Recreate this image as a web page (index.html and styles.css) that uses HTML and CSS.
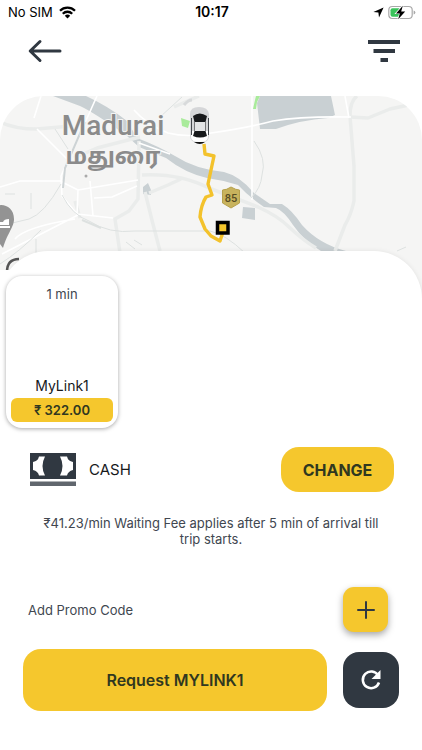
FILE: index.html
```html
<!DOCTYPE html>
<html lang="en">
<head>
<meta charset="utf-8">
<meta name="viewport" content="width=device-width, initial-scale=1">
<title>Request a ride</title>
<link rel="stylesheet" href="styles.css">
</head>
<body>
<div class="status">
  <div class="status-left">
    <span>No SIM</span>
    <svg width="17" height="13" viewBox="0 0 17 13" aria-hidden="true"><g fill="none" stroke="#000" stroke-width="2.3"><path d="M1 4.7a10.7 10.7 0 0 1 15 0"/><path d="M3.8 7.7a6.7 6.7 0 0 1 9.4 0"/></g><path d="M5.8 9.8a3.9 3.9 0 0 1 5.4 0L8.5 12.5z"/></svg>
  </div>
  <time class="clock">10:17</time>
  <div class="status-right">
    <svg width="11" height="11" viewBox="0 0 11 11" aria-hidden="true"><path d="M10.6.4 6 10.6 5.4 5.6.4 5z"/></svg>
    <svg width="28" height="15" viewBox="0 0 28 15" aria-hidden="true"><rect x=".8" y="1.5" width="23.4" height="12" rx="3.5" fill="#fff" stroke="#a9a9a9" stroke-width="1.2"/><rect x="2.5" y="3.2" width="10" height="8.6" rx="2" fill="#3ac35b"/><path d="M25.600 5.500q1.800.4 1.800 2t-1.800 2z" fill="#a9a9a9"/><path d="M14.800.8 8 8.400h3.800l-1.600 5.800 7-7.600h-4z" stroke="#fff" stroke-width="1.400" paint-order="stroke"/></svg>
  </div>
</div>

<header class="topbar">
  <button class="icon-btn" aria-label="Back">
    <svg width="34" height="24" viewBox="0 0 34 24"><path d="M32 12H3M12 2.500 2.200 12 12 21.500" fill="none" stroke="#303841" stroke-width="3" stroke-linecap="round" stroke-linejoin="round"/></svg>
  </button>
  <button class="icon-btn" aria-label="Filters">
    <svg width="34" height="24" viewBox="0 0 34 24"><path d="M1 3h32M6.500 12h21.500M13.500 21h7.500" stroke="#303841" stroke-width="3.800"/></svg>
  </button>
</header>

<main>
  <section class="map" aria-label="Route map">
    <svg class="map-art" viewBox="0 0 422 204" preserveAspectRatio="xMidYMin slice">
      <rect width="422" height="204" fill="#f5f5f4"/>
      <g fill="#c9d0d3">
        <path d="M53 0H86Q108 10 127 25L137 42Q158 50 175 60Q195 73 224 76Q240 80 254 97L270 108H282Q292 114 302 129Q319 148 346 155H321Q304 145 293 129Q284 115 276 112L264 111Q249 101 238 89Q222 84 207 82Q185 77 166 62L139 51L126 39Q93 16 80 10Z"/>
        <path d="M260 0H331L335 19L328 22Q300 24 276 33H260L257 7Z"/>
        <path d="M243 111l12 1v12l-13-2ZM143 91l5-4 3 7v5l-8-1Z"/>
      </g>
      <path d="M181 22l9 3-2 7-6-2ZM256 0h4l-3 6-1 7h-3l2-9Z" fill="#a9eb9b"/>
      <g fill="none" stroke="#eaeceb" stroke-width="3.500" stroke-linejoin="round">
        <path d="M357 0Q350 5 350 20L354 70V105Q351 119 345 129L335 155"/>
        <path d="M350 21l18 1 22-9 28-6M0 26q15 7 37 7l34-3M140 41L97 52L74 62M139 45l-1 58-9 12-14 8 5 34M145 96q7 29 15 59"/>
        <path d="M142 79q37-2 67 13l49 19q20 9 31 20 15 14 27 21M149 97l19-8 13-6M174 11l25-11M75 105l5 17"/>
      </g>
      <g fill="none" stroke="#fff" stroke-width="1.600" stroke-linejoin="round">
        <path d="M97 0L84 29L61 80L62 100L77 118L78 94 60 85L20 85L0 91M77 118l36 4M41 0L34 22M15 143q10-12 60-20M78 119L2 158M93 120l-3-35M94 102l18-1 25-11M37 33l30 30"/>
        <path d="M134 14q12 14 34 23 20 5 43 0 40-6 62-12 30-5 78-4M252 0v104M345 0l4 22M139 47l31 11M78 94l60-10"/>
      </g>
      <g fill="none" stroke="#dde1e0" stroke-width="1">
        <path d="M55 33l13 20M61 88Q44 118 29 123L0 130M62 99q10 20 27 26 20 13 46 10h75q15 3 35 22M36 166V143M0 168q19-12 41-34M254 45q13 18 8 34-1 13-11 23M182 1l-22 20M5 98h10M31 97v16M126 146l9 7M134 144l8 5M397 155l9-4"/>
        <path d="M85 26L65 72L63 92" stroke="#cdd3d5" stroke-width="2"/>
        <path d="M82 124l19 8" stroke-width="2"/>
      </g>
      <path d="M184 9q4-5 8-5" stroke="#d8dadb" stroke-width="3" fill="none"/>
      <circle cx="86" cy="80" r="1.500" fill="#aaa"/>
      <g class="city">
        <text x="113" y="39" class="city-en">Madurai</text>
        <text x="113" y="68" class="city-ta">மதுரை</text>
      </g>
      <path d="M-11 123C-11 104 14 105 14 123c0 8-6 13-11 29Q-11 134-11 123Z" fill="#939393"/>
      <path d="M0 126h3q1-3 6-3v6H0ZM0 130h10v2H0Z" fill="#fff"/>
      <path d="M7 176q0-13 12-13" stroke="#555" stroke-width="2.500" fill="none"/>
      <path d="M204 48L205 58 214 60 208 88 212 99 206 101Q201 109 200 121L205 133 211 140 220 145 223 136" fill="none" stroke="#f3c22c" stroke-width="3.400" stroke-linejoin="round"/>
      <path d="M222.500 94q4 0 8.500-3 5 3 8.500 3v13l-8.500 5-8.500-5Z" fill="#c8b35d" stroke="#b6a14d"/>
      <text x="231" y="106" class="road">85</text>
      <g>
        <path d="M190 18q0-7 9-7t10 7v22q0 7-9.500 7T190 40Z" fill="#d5d6d8"/>
        <path d="M191 35h17v6q0 5-8.500 5T191 41Z" fill="#fff"/>
        <path d="M194 46h11q-5 4-11 0Z" fill="#111"/>
        <path d="M193 20q6.500-5 14 0l-1.500 6v9l1.500 5q-7 3-14 0l1.500-5v-9Z" fill="#17191b"/>
        <path d="M195 26h10v9h-10Z" fill="#e3e4e5"/>
        <path d="M191.500 22v17M208.500 22v17" stroke="#44484c"/>
      </g>
      <rect x="217.500" y="126.500" width="10.500" height="10.500" fill="#f5c72d" stroke="#000" stroke-width="3.500"/>
    </svg>
  </section>

  <section class="sheet">
    <div class="rides">
      <button class="ride">
        <span class="eta">1 min</span>
        <span class="ride-name">MyLink1</span>
        <span class="fare">₹ 322.00</span>
      </button>
    </div>

    <div class="payment">
      <svg width="46" height="33" viewBox="0 0 46 33" aria-hidden="true"><path d="M0 0h46v26H0z" fill="#303841"/><path d="M0 28.500h46V33H0z" fill="#60666d"/><path d="M9 3.500h6Q10 13 15 22.500H9Q8 18 3 17V9Q8 8 9 3.500ZM30 3.500h7Q38 8 43 9v8Q38 18 37 22.500h-7Q35 13 30 3.500Z" fill="#fff"/></svg>
      <span class="method">CASH</span>
      <button class="change">CHANGE</button>
    </div>

    <p class="notice">₹41.23/min Waiting Fee applies after 5 min of arrival till trip starts.</p>

    <div class="promo">
      <label for="promo-add">Add Promo Code</label>
      <button class="add" id="promo-add">
        <svg width="18" height="18" viewBox="0 0 18 18" aria-hidden="true"><path d="M9 1v16M1 9h16" stroke="#303841" stroke-width="2" stroke-linecap="round"/></svg>
      </button>
    </div>

    <div class="actions">
      <button class="request">Request MYLINK1</button>
      <button class="refresh" aria-label="Refresh">
        <svg width="22" height="22" viewBox="0 0 22 22"><path d="M18.200 6.500A8.300 8.300 0 1 0 19 13.500" fill="none" stroke="#fff" stroke-width="2.500"/><path d="M20.500 1v9h-9Z" fill="#fff"/></svg>
      </button>
    </div>
  </section>
</main>
</body>
</html>
```
FILE: styles.css
```css
* {
  box-sizing: border-box;
}

body {
  margin: 0;
  background: #fff;
  color: #414750;
  font-family: Inter, "Noto Sans", sans-serif;
  font-size: 13px;
  line-height: 16px;
}

button {
  padding: 0;
  border: 0;
  background: none;
  color: inherit;
  font: inherit;
  cursor: pointer;
}

svg {
  display: block;
  flex: none;
}

.status {
  display: grid;
  grid-template-columns: 1fr auto 1fr;
  align-items: center;
  height: 24px;
  padding: 0 6px 0 8px;
  color: #000;
}

.status-left,
.status-right {
  display: flex;
  align-items: center;
  gap: 6px;
}

.status-right {
  justify-content: flex-end;
  gap: 4px;
}

.clock {
  font-size: 14px;
  font-weight: 600;
}

.topbar {
  display: flex;
  justify-content: space-between;
  height: 72px;
  padding: 15px 21px 0 28px;
}

.icon-btn {
  height: 24px;
}

.map {
  height: 204px;
  border-radius: 44px 44px 0 0;
  overflow: hidden;
}

.map-art {
  width: 100%;
  height: 100%;
}

.city {
  fill: #8b8b8b;
  stroke: #f5f5f4;
  stroke-width: 2px;
  paint-order: stroke;
  text-anchor: middle;
}

.city-en {
  font: 500 28px Roboto, sans-serif;
}

.city-ta {
  font: 700 23px "Noto Sans Tamil", "Noto Sans", sans-serif;
}

.road {
  fill: #574d24;
  font: 500 11px Roboto, sans-serif;
  text-anchor: middle;
}

.sheet {
  position: relative;
  margin-top: -49px;
  padding-top: 19px;
  border-radius: 48px 48px 0 0;
  background: #fff;
  box-shadow: 0 0 5px rgba(0, 0, 0, 0.08);
}

.rides {
  width: 124px;
  padding: 6px;
  background: #fff;
}

.ride {
  display: flex;
  flex-direction: column;
  align-items: center;
  width: 112px;
  height: 152px;
  padding: 10px 5px 6px;
  border-radius: 16px;
  background: #fff;
  box-shadow: 0 1px 4px rgba(0, 0, 0, 0.35);
}

.ride-name {
  margin-top: auto;
  color: #17191c;
  font-size: 14px;
  line-height: 24px;
}

.fare {
  align-self: stretch;
  border-radius: 6px;
  background: #f5c72d;
  color: #303820;
  font-weight: 600;
  line-height: 24px;
}

.payment {
  display: flex;
  align-items: center;
  gap: 13px;
  margin-top: 13px;
  padding: 0 28px 0 30px;
}

.method {
  color: #17191c;
  font-size: 15px;
}

.change {
  width: 113px;
  height: 45px;
  margin-left: auto;
  border-radius: 18px;
  background: #f5c72d;
  color: #303820;
  font-size: 16px;
  font-weight: 700;
}

.notice {
  margin: 23px 32px 0;
  text-align: center;
}

.promo {
  display: flex;
  align-items: center;
  justify-content: space-between;
  margin-top: 40px;
  padding: 0 34px 0 28px;
}

.add {
  display: grid;
  place-items: center;
  width: 45px;
  height: 45px;
  border-radius: 11px;
  background: #f5c72d;
  box-shadow: 0 3px 7px rgba(0, 0, 0, 0.35);
}

.actions {
  display: flex;
  align-items: center;
  gap: 16px;
  margin-top: 17px;
  padding: 0 23px;
}

.request {
  flex: 1;
  height: 62px;
  border-radius: 18px;
  background: #f5c72d;
  color: #303820;
  font-size: 16px;
  font-weight: 600;
}

.refresh {
  display: grid;
  place-items: center;
  width: 56px;
  height: 56px;
  border-radius: 16px;
  background: #303841;
}
```
